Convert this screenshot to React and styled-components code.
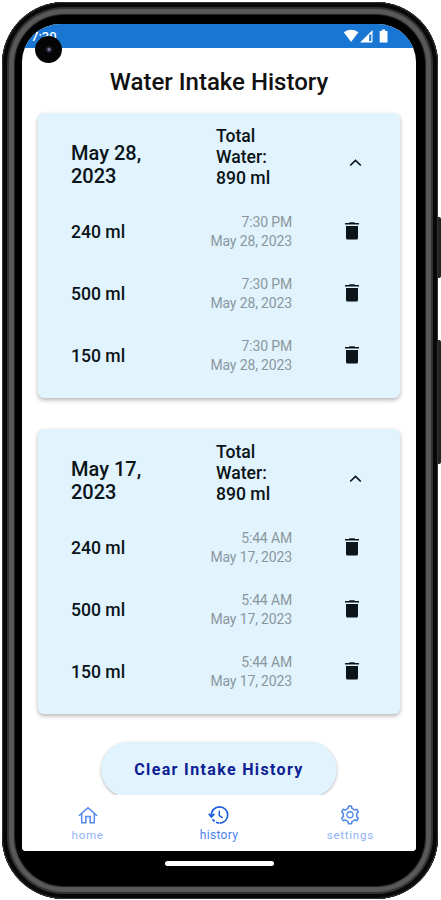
import React from 'react'
import styled, { createGlobalStyle } from 'styled-components'
import { AiOutlineSetting } from 'react-icons/ai'

const GlobalStyle = createGlobalStyle`
	* {
		box-sizing: border-box;
	}
	body {
		margin: 0;
		background: #fff;
		font-family: Roboto, "Liberation Sans", sans-serif;
		overflow: hidden;
	}
`

const Stage = styled.div`
	position: relative;
	width: 441px;
	height: 900px;
	padding: 2px 3px 1px 2px;
`

const SideButton = styled.div`
	position: absolute;
	right: 0;
	top: ${props => props.$top}px;
	width: 5px;
	height: ${props => props.$height}px;
	border-radius: 0 2px 2px 0;
	background: #222;
`

const Phone = styled.div`
	position: relative;
	height: 100%;
	padding: 22px 22px 47px 20px;
	border-radius: 62px;
	background: #000;
	box-shadow:
		inset 0 0 0 1px #333,
		inset 0 0 0 5px #080808,
		inset 0 0 1px 7px #303030,
		inset 0 0 1px 12px #595959,
		inset 0 0 1px 13px #222;
`

const Screen = styled.div`
	display: flex;
	flex-direction: column;
	height: 827px;
	border-radius: 38px 38px 4px 4px;
	overflow: hidden;
	background: #fff;
`

const StatusBar = styled.div`
	display: flex;
	flex: none;
	justify-content: space-between;
	height: 24px;
	padding: 4px 25px 0 9px;
	background: #1976d2;
	color: #fff;
`

const Clock = styled.span`
	font-size: 13px;
	font-weight: 500;
	line-height: 17px;
`

const Camera = styled.div`
	position: absolute;
	left: 33px;
	top: 34px;
	width: 27px;
	height: 27px;
	border-radius: 50%;
	background: radial-gradient(circle at 52% 50%, #75759a 0 1px, #29293b 2px, #050505 4px);
`

const Content = styled.main`
	flex: 1;
	min-height: 0;
	overflow: hidden;
	padding: 0 16px;
`

const Title = styled.h1`
	margin: 0;
	padding-top: 18px;
	height: 65px;
	font-size: 24px;
	font-weight: 500;
	line-height: 32px;
	text-align: center;
	color: #111;
`

const Card = styled.section`
	height: 285px;
	margin-bottom: 31px;
	border-radius: 6px;
	background: #e1f3fd;
	box-shadow: 0 2px 4px rgba(0, 0, 0, 0.3);
`

const CardHeader = styled.header`
	display: grid;
	grid-template-columns: 146px 128px 1fr;
	height: 88px;
	padding: 12px 0 0 33px;
	color: #0b1419;
`

const DateLabel = styled.h2`
	width: 90px;
	margin: 17px 0 0;
	font-size: 20px;
	font-weight: 500;
	line-height: 23px;
`

const Total = styled.div`
	width: 70px;
	margin: 1px 0 0 -1px;
	font-size: 17.6px;
	font-weight: 500;
	line-height: 21px;
`

const Chevron = styled.svg`
	margin: 33px 0 0 4px;
	width: 13px;
	height: 9px;
`

const Row = styled.div`
	display: grid;
	grid-template-columns: 100px 121px 1fr;
	align-items: center;
	height: 62px;
	padding-left: 33px;
`

const Amount = styled.span`
	font-size: 17.6px;
	font-weight: 500;
	color: #0b1419;
`

const Time = styled.div`
	font-size: 14px;
	line-height: 19px;
	letter-spacing: -0.14px;
	text-align: right;
	color: #8b979e;
`

const Trash = styled.svg`
	margin: -4px 0 0 53px;
	width: 14px;
	height: 19px;
`

const ClearButton = styled.button`
	display: block;
	width: 236px;
	height: 55px;
	margin: -3px auto 0;
	border: 0;
	border-radius: 28px;
	background: #e1f3fd;
	box-shadow: 0 1px 3px rgba(0, 0, 0, 0.3);
	font-family: inherit;
	font-size: 16px;
	font-weight: 700;
	letter-spacing: 1.35px;
	color: #0b2094;
`

const TabBar = styled.nav`
	display: grid;
	grid-template-columns: repeat(3, 1fr);
	flex: none;
	height: 56px;
	background: #fff;
`

const Tab = styled.div`
	display: flex;
	flex-direction: column;
	align-items: center;
	padding-top: 9px;
	color: ${props => (props.$active ? '#1b5cdf' : '#5289ec')};

	svg {
		width: 22px;
		height: 22px;
	}

	span {
		margin-top: 1px;
		font-size: ${props => (props.$active ? '12px' : '11.6px')};
		line-height: 16px;
		letter-spacing: ${props => (props.$active ? '0.3px' : '0.7px')};
		color: ${props => (props.$active ? '#4d7ff0' : '#91b3fa')};
	}
`

const HomeIndicator = styled.div`
	width: 109px;
	height: 5px;
	margin: 10px auto 0;
	border-radius: 3px;
	background: #fff;
`

const days = [
	{ date: 'May 28, 2023', time: '7:30 PM' },
	{ date: 'May 17, 2023', time: '5:44 AM' },
]

const amounts = [240, 500, 150]

const StatusIcons = () => (
	<svg width="48" height="16" viewBox="0 0 48 16" fill="#fff">
		<path d="M.8 4.2Q8 -.6 15.4 4.2L8.1 14Z" />
		<path fillRule="evenodd" d="M29.5 2V14.5H17ZM28.3 6.5H26.2V13H28.3Z" />
		<path d="M36.7 3H38.8V1.5H42.1V3H44.5V14.5H36.7Z" />
	</svg>
)

const HomeIcon = () => (
	<svg viewBox="0 0 22 22" fill="none" stroke="currentColor" strokeWidth="1.5">
		<path d="M2 11.7L11 3.7L20 11.7M4.7 9.8V18.8H8.8V12.6H13.2V18.8H17.3V9.8" />
	</svg>
)

const HistoryIcon = () => (
	<svg viewBox="0 0 22 22" fill="none" stroke="currentColor" strokeWidth="1.7">
		<path d="M3.4 12.5C2.8 6.5 7 2.9 11.6 2.9A8.1 8.1 0 0 1 11.6 19.1" />
		<path d="M4.6 15.3A8.1 8.1 0 0 0 11.6 19.1" strokeDasharray="3 1.6" />
		<path d="M.8 9.8L3.4 12.9L6.3 9.8" />
		<path d="M11.3 6.8V11.5L14.8 13.8" strokeWidth="1.4" />
	</svg>
)

const TrashIcon = () => (
	<Trash viewBox="0 0 14 19" fill="#0b1419">
		<path d="M4.3 1.2H9.7V2H14V3.6H0V2H4.3Z" />
		<path d="M1 5H13V17Q13 18.5 11.5 18.5H2.5Q1 18.5 1 17Z" />
	</Trash>
)

const DayCard = ({ day }) => (
	<Card>
		<CardHeader>
			<DateLabel>{day.date}</DateLabel>
			<Total>Total Water: 890 ml</Total>
			<Chevron viewBox="0 0 13 9" fill="none" stroke="#0b1419" strokeWidth="1.7">
				<path d="M1.2 7.5L6.5 2.5L11.8 7.5" />
			</Chevron>
		</CardHeader>
		{amounts.map(amount => (
			<Row key={amount}>
				<Amount>{amount} ml</Amount>
				<Time>
					<div>{day.time}</div>
					<div>{day.date}</div>
				</Time>
				<TrashIcon />
			</Row>
		))}
	</Card>
)

const App = () => (
	<Stage>
		<GlobalStyle />
		<SideButton $top={217} $height={61} />
		<SideButton $top={340} $height={124} />
		<Phone>
			<Screen>
				<StatusBar>
					<Clock>7:30</Clock>
					<StatusIcons />
				</StatusBar>
				<Content>
					<Title>Water Intake History</Title>
					{days.map(day => <DayCard key={day.date} day={day} />)}
					<ClearButton>Clear Intake History</ClearButton>
				</Content>
				<TabBar>
					<Tab>
						<HomeIcon />
						<span>home</span>
					</Tab>
					<Tab $active>
						<HistoryIcon />
						<span>history</span>
					</Tab>
					<Tab>
						<AiOutlineSetting />
						<span>settings</span>
					</Tab>
				</TabBar>
			</Screen>
			<HomeIndicator />
			<Camera />
		</Phone>
	</Stage>
)

export default App
